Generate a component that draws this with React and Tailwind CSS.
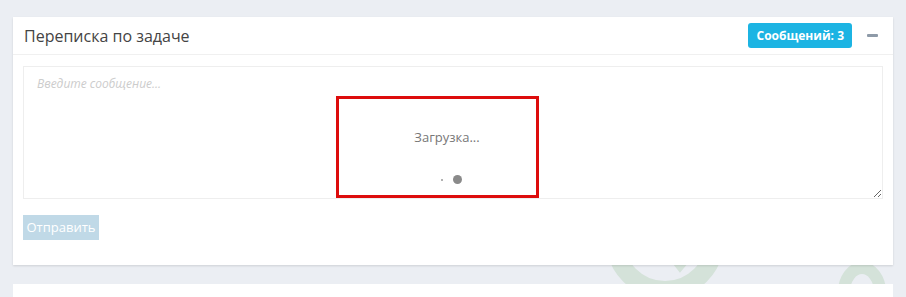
import React from 'react';

function Watermark() {
  return (
    <svg className="absolute left-0 top-0 pointer-events-none" width="906" height="297" viewBox="0 0 906 297">
      <circle cx="665" cy="240" r="50" fill="none" stroke="#d4e2d9" strokeWidth="18" />
      <path d="M672 258 L680 268 L690 256" fill="none" stroke="#d4e2d9" strokeWidth="6" />
      <ellipse cx="862" cy="292" rx="18" ry="24" fill="none" stroke="#d4e2d9" strokeWidth="12" />
    </svg>
  );
}

function Loader() {
  return (
    <div className="absolute left-[323px] top-[41px] w-[203px] h-[102px] border-[3px] border-[#dd0c0c] bg-white flex flex-col items-center pl-[19px]">
      <div className="mt-[30px] text-[13px] text-[#777] leading-4">Загрузка...</div>
      <div className="mt-[30px] flex items-center gap-[10px] ml-[8px]">
        <span className="w-[2px] h-[2px] rounded-full bg-[#999]"></span>
        <span className="w-[9px] h-[9px] rounded-full bg-[#8a8a8a]"></span>
      </div>
    </div>
  );
}

export default function App() {
  return (
    <div className="relative w-[906px] h-[297px] overflow-hidden bg-[#ebeef3] pt-[17px] px-[13px] font-['Open_Sans','Liberation_Sans',sans-serif]">
      <Watermark />

      {/* Task correspondence panel */}
      <div className="relative bg-white shadow-[0_1px_2px_rgba(0,0,0,0.12)]">
        <div className="h-[38px] flex items-center justify-between pl-[11px] pr-[15px] border-b border-[#f0f0f0]">
          <h3 className="text-[16px] text-[#444] leading-none">Переписка по задаче</h3>
          <div className="flex items-center gap-[15px]">
            <span className="h-[25px] px-[8px] flex items-center rounded-[3px] bg-[#1cb4e3] text-white text-[12px] font-bold">
              Сообщений: 3
            </span>
            <span className="w-[11px] h-[3px] bg-[#8e9aa8] rounded-[1px]"></span>
          </div>
        </div>

        <div className="relative px-[10px] pt-[11px] pb-[25px]">
          <textarea
            className="block w-full h-[133px] border border-[#eee] px-[13px] py-[8px] text-[12px] italic text-[#555] placeholder:text-[#ccc] outline-none resize-y"
            placeholder="Введите сообщение..."
          ></textarea>
          <button className="mt-[16px] h-[25px] w-[76px] bg-[#c0d9e7] text-white text-[13px] leading-none">
            Отправить
          </button>
          <Loader />
        </div>
      </div>

      <div className="relative mt-[19px] h-[40px] bg-white"></div>
    </div>
  );
}
